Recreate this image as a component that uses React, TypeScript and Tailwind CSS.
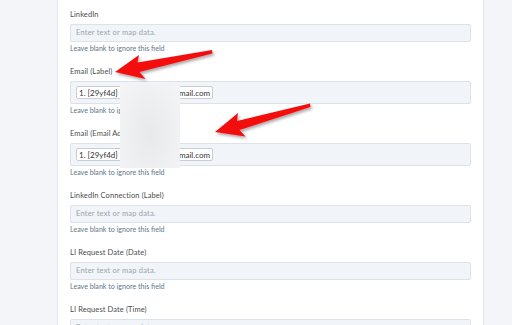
import React from "react";

const font = { fontFamily: "Lato, 'Open Sans', Arial, sans-serif" };

function Help() {
  return (
    <div className="h-[12px] leading-[12px] mt-[1px] text-[7.1px] text-[#62758a]">
      Leave blank to ignore this field
    </div>
  );
}

function Label({ children }: { children: React.ReactNode }) {
  return <div className="h-[12px] leading-[12px] text-[7.5px] text-[#4d4d4d] tracking-[0.1px]">{children}</div>;
}

function TextField({ label }: { label: string }) {
  return (
    <div className="mb-[11px]">
      <Label>{label}</Label>
      <div className="mt-[3px] h-[18px] rounded-[2px] border border-[#dde2e8] bg-[#f1f4f8] pl-[5px] flex items-center text-[7.5px] text-[#9aa3ad] tracking-[0.2px]">
        Enter text or map data.
      </div>
      <Help />
    </div>
  );
}

function ChipField({ label }: { label: string }) {
  return (
    <div className="mb-[11px]">
      <Label>{label}</Label>
      <div className="mt-[3px] h-[23px] rounded-[2px] border border-[#dde2e8] bg-[#f1f4f8] pl-[5px] flex items-center">
        <div className="h-[13px] w-[137px] rounded-[2px] border border-[#c9ced4] bg-white flex items-center justify-between px-[2px] text-[8px] text-[#333]">
          <span>1. [29yf4d]</span>
          <span>xxxxxxxx@gmail.com</span>
        </div>
      </div>
      <Help />
    </div>
  );
}

export default function App() {
  return (
    <div className="w-[512px] h-[325px] overflow-hidden bg-[#f3f5f9] flex relative" style={font}>
      <div className="w-[57px] shrink-0" />
      <div className="w-[427px] shrink-0 bg-white border-l border-r border-[#e2e6ed] pt-[9px] pl-[12px] pr-[12px]">
        <TextField label="LinkedIn" />
        <ChipField label="Email (Label)" />
        <ChipField label="Email (Email Address)" />
        <TextField label="LinkedIn Connection (Label)" />
        <TextField label="LI Request Date (Date)" />
        <TextField label="LI Request Date (Time)" />
      </div>
      <div className="flex-1" />

      <div
        className="absolute left-[120px] top-[84px] w-[60px] h-[84px]"
        style={{
          background:
            "radial-gradient(ellipse at 50% 60%, #e8e9eb 0%, #eeeff0 50%, #f4f5f6 100%)",
        }}
      />

      <svg className="absolute left-0 top-0" width="512" height="325" viewBox="0 0 512 325">
        <defs>
          <filter id="sh" x="-20%" y="-50%" width="140%" height="200%">
            <feDropShadow dx="1.5" dy="2" stdDeviation="1.8" floodColor="#000" floodOpacity="0.35" />
          </filter>
        </defs>
        <polygon
          filter="url(#sh)"
          fill="#f40d0d"
          points="115,72 139,55 137.5,62.5 212,50 212.4,53.5 139.5,72 145.5,79"
        />
        <polygon
          filter="url(#sh)"
          fill="#f40d0d"
          points="215,132 238,113 237,121 310,103.5 310.5,107 239.5,130 245.5,136.5"
        />
      </svg>
    </div>
  );
}
